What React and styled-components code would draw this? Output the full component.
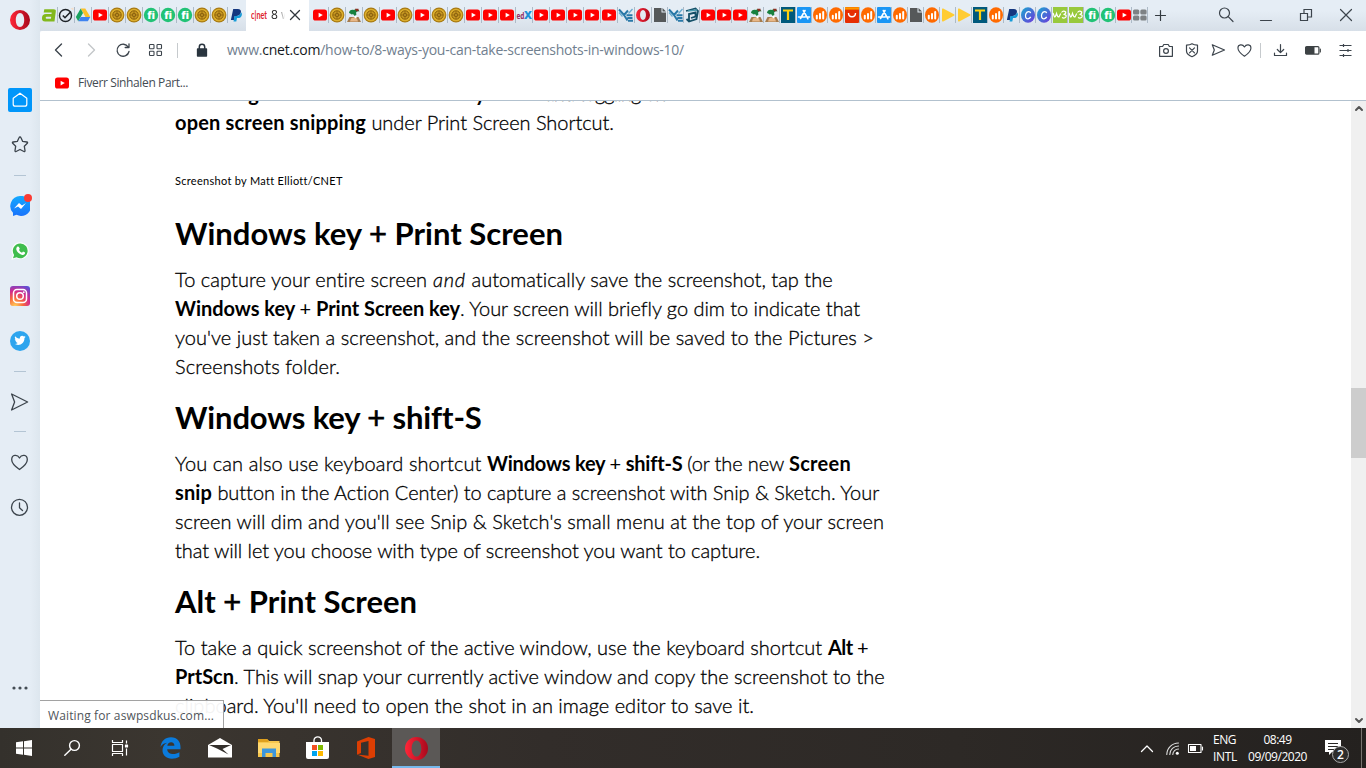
import React, { useLayoutEffect, useRef } from "react";
import styled, { createGlobalStyle, css } from "styled-components";

const Global = createGlobalStyle`
  * { box-sizing: border-box; }
  html, body { margin: 0; padding: 0; overflow: hidden; background: #fff; }
  svg { display: block; flex: none; }
`;

const uiFont = css`font-family: "Open Sans", "Noto Sans", sans-serif;`;
const articleFont = css`font-family: Lato, "Liberation Sans", sans-serif;`;

/* ---------- shell ---------- */
const Screen = styled.div`
  width: 1366px; height: 768px; display: flex; flex-direction: column; overflow: hidden;
  ${uiFont}
`;
const Browser = styled.div`
  height: 728px; display: flex; background: #e4ecf4;
`;
const Sidebar = styled.nav`
  width: 40px; flex: none; display: flex; flex-direction: column;
  background: linear-gradient(90deg, #e5edf5 0 75%, #dde6ee);
`;
const SideItem = styled.div`
  height: ${(p) => p.$h}px; margin-top: ${(p) => p.$top || "0"};
  display: flex; align-items: center; justify-content: center; flex: none;
`;
const SideRule = styled.div`
  height: 1px; width: 12px; margin: 7px auto 8px; background: #b4c5d4; flex: none;
`;
const Badged = styled.div`position: relative; display: flex;`;
const Badge = styled.i`
  position: absolute; right: -2px; top: -2px; width: 8px; height: 8px; border-radius: 50%; background: #fb3c34;
`;
const HomeTile = styled.div`
  width: 24px; height: 24px; border-radius: 2px; background: #0096fa; display: flex; align-items: center; justify-content: center;
`;
const Main = styled.div`flex: 1; min-width: 0; display: flex; flex-direction: column;`;

/* ---------- tabs ---------- */
const TabBar = styled.div`
  height: 31px; display: flex; padding-left: 1px; flex: none;
  background: linear-gradient(180deg, #e5edf5 0 35%, #d7dfe8);
`;
const Tab = styled.div`
  width: ${(p) => p.$w}px; height: 30px; flex: none; display: flex; align-items: center; padding-left: ${(p) => (p.$w > 16 ? 1 : 0.5)}px;
  &::after {
    content: ""; width: 1px; height: 16px; margin-left: auto; background: ${(p) => (p.$last ? "transparent" : "#adbac7")};
  }
`;
const ActiveTab = styled.div`
  width: 63px; margin: 0 3px 0 1px; height: 31px; background: #fff; display: flex; align-items: center; padding: 0 0 1px 5px; flex: none;
`;
const TabTitle = styled.span`
  width: 14px; margin-left: 4px; overflow: hidden; white-space: nowrap; font-size: 12px; line-height: 16px; color: #222;
  mask-image: linear-gradient(90deg, #000 45%, transparent);
`;
const TabClose = styled.span`margin-left: 5px; display: flex;`;
const WindowControls = styled.div`margin-left: auto; display: flex; height: 30px; padding-right: 1px;`;
const Slot = styled.div`
  width: ${(p) => p.$w}px; height: ${(p) => p.$h || "100%"}; flex: none; display: flex; align-items: center; justify-content: center;
`;

/* ---------- toolbar ---------- */
const Toolbar = styled.div`
  height: 38px; background: #fff; border-top-left-radius: 2px; display: flex; align-items: center; padding: 0 5px 0 3px; flex: none;
`;
const VRule = styled.i`
  width: 1px; height: 15px; margin: ${(p) => p.$m}; background: #c6cacd;
`;
const Url = styled.div`
  margin-left: 9px; font-size: 14px; line-height: 20px; color: #71808f; white-space: pre;
  b { font-weight: 400; color: #14181c; }
`;
const Push = styled.div`margin-left: auto; display: flex; align-items: center;`;
const Bookmarks = styled.div`
  height: 32px; background: #fff; border-bottom: 1px solid #b2c1ce; display: flex; align-items: center; padding: 0 0 3px 15px; flex: none;
  font-size: 12px; color: #434b53;
`;
const BookmarkName = styled.span`margin-left: 9px; line-height: 16px;`;

/* ---------- page ---------- */
const Viewport = styled.div`flex: 1; min-height: 0; display: flex; background: #fff; position: relative;`;
const Page = styled.article`
  flex: 1; min-width: 0; overflow: hidden; padding-left: 135px; color: #000;
  ${articleFont}
`;
const Scrolled = styled.div`margin-top: -22px;`;
const Paragraph = styled.div`font-size: 20px; font-weight: 300; line-height: 29px;`;
const Line = styled.div`height: 29px; white-space: pre; display: flex;`;
const Heading = styled.h2`
  margin: 18px 0 14px; height: 36px; line-height: 36px; font-size: 31px; font-weight: 700; white-space: pre; display: flex;
`;
const Caption = styled.div`
  margin: 34px 0 24px; height: 20px; line-height: 20px; font-size: 11px; white-space: pre; display: flex;
`;
const RunBox = styled.span`
  display: block; width: ${(p) => p.$w}px; flex: none; white-space: pre;
  font-weight: ${(p) => (p.$bold ? 700 : "inherit")};
  font-style: ${(p) => (p.$italic ? "italic" : "normal")};
  ${Paragraph} & { -webkit-text-stroke: ${(p) => (p.$bold ? "0" : "0.3px #000")}; }
`;
const Plus = styled.span`font-weight: 400; ${Heading} & { -webkit-text-stroke: 0.6px #000; }`;
const Scrollbar = styled.div`
  width: 15px; background: #f0f0f0; display: flex; flex-direction: column; align-items: center; justify-content: space-between; padding: 4px 0; position: relative;
`;
const Thumb = styled.div`position: absolute; left: 0; top: 287px; width: 15px; height: 70px; background: #cdcdcd;`;
const Status = styled.div`
  position: absolute; left: 0; bottom: 0; width: 184px; height: 28px; padding: 1px 0 0 8px; line-height: 28px;
  border-top: 1px solid #a2a2a2; border-right: 1px solid #a2a2a2; background: rgba(255, 255, 255, 0.95);
  font-size: 12px; color: #50555a; white-space: pre;
`;

/* ---------- taskbar ---------- */
const Taskbar = styled.footer`
  height: 40px; display: flex; background: linear-gradient(90deg, #34312c 0, #3b3630 12%, #322d2a 40%, #2d2926 70%, #24211f 100%); color: #fff;
`;
const TaskItem = styled.div`
  width: ${(p) => p.$w}px; margin-left: ${(p) => p.$ml || 0}px; height: 40px; display: flex; align-items: center; justify-content: center; flex: none;
  ${(p) => p.$active && css`background: #5b5856; border-bottom: 2px solid #76b9ed; padding-top: 2px;`}
`;
const Tray = styled.div`margin-left: auto; display: flex; align-items: center;`;
const TrayText = styled.div`
  width: ${(p) => p.$w}px; font-size: 12px; line-height: 17px; white-space: pre; padding-left: ${(p) => p.$pl || 0}px;
  display: flex; flex-direction: column; align-items: ${(p) => p.$align};
`;
const Notice = styled.div`position: relative; width: 52px; height: 40px; padding: 12px 0 0 16px;`;
const NoticeCount = styled.span`
  position: absolute; left: 23px; top: 18px; width: 17px; height: 17px; border-radius: 50%; border: 1px solid #a9a9a9; background: #2d2c2b;
  font-size: 12px; line-height: 15px; font-weight: 600; text-align: center;
`;
const ShowDesktop = styled.div`width: 5px; height: 40px; border-left: 1px solid #77736f;`;

/* Spreads the letters of a run so that it takes exactly the given measure. */
function Run({ w, bold, italic, children }) {
  const ref = useRef(null);
  useLayoutEffect(() => {
    const el = ref.current;
    el.style.letterSpacing = "0px";
    const range = document.createRange();
    range.selectNodeContents(el);
    const natural = range.getBoundingClientRect().width;
    el.style.letterSpacing = `${(w - natural) / el.textContent.length}px`;
  }, [w]);
  return <RunBox ref={ref} $w={w} $bold={bold} $italic={italic}>{children}</RunBox>;
}

/* ---------- favicons ---------- */
const Fav = ({ children, box = "0 0 14 14" }) => <svg width="14" height="16" viewBox={box} overflow="visible">{children}</svg>;
const YouTube = () => (
  <Fav><rect x="0" y="1.500" width="14" height="11" rx="2.600" fill="#f00" /><path d="M5.600 4.700l4.200 2.400-4.200 2.400z" fill="#fff" /></Fav>
);
const Coin = () => (
  <Fav><circle cx="7" cy="7" r="7.400" fill="#a87a12" /><circle cx="7" cy="7" r="6.300" fill="#dcae2c" /><circle cx="7" cy="7" r="4.200" fill="#c99a22" stroke="#8a5f0c" strokeWidth="1" /><circle cx="7" cy="7" r="1.800" fill="#e0b43a" stroke="#80570a" strokeWidth=".9" /><path d="M7 3v8M3 7h8" stroke="#8a5f0c" strokeWidth=".6" /></Fav>
);
const Fiverr = () => (
  <Fav><circle cx="7" cy="7" r="7.200" fill="#22c276" /><text x="7" y="11" textAnchor="middle" fontFamily="Open Sans" fontWeight="800" fontSize="10.500" fill="#fff">fi</text></Fav>
);
const PayPal = () => (
  <Fav><path d="M4.200 1h4.600c2.400 0 3.600 1.300 3.100 3.600C11.400 7 9.700 8 7.300 8H5.800L5 12H1.900z" fill="#14377f" /><path d="M11.900 4.200c1 .7 1.200 1.800.9 3C12.300 9.300 10.800 10 9 10H8l-.7 3.500H4.500L5.500 8h1.900c2.500 0 4.100-1.300 4.500-3.800z" fill="#169bd7" /></Fav>
);
const LogoA = () => (
  <Fav><path fillRule="evenodd" d="M2.300 1.200H11.500q2.700 0 2.300 2.400L12.500 13.500H3.200C.6 13.500-.2 12.200 0 9.800.2 7.200 1.500 6 4 6h5.500l.2-1.500H1.700zM9.200 8.800H4.700q-1 0-1 1t.9 1h4.300z" fill="#82b81c" /></Fav>
);
const CheckRing = () => (
  <Fav><circle cx="6.500" cy="7.500" r="6" fill="none" stroke="#1d2227" strokeWidth="1.400" /><path d="M3.800 7.500l2.200 2.200L12 3.500" fill="none" stroke="#1d2227" strokeWidth="1.600" /><path d="M11.500.5l3-1v3z" fill="#f3ddca" /></Fav>
);
const Drive = () => (
  <Fav><path d="M4.700 .5h4.600L14.300 9H9.500z" fill="#fbc02a" /><path d="M4.700.5L-.2 9l2.400 4.300L7 5z" fill="#1aa260" /><path d="M4.700 9h9.600l-2.500 4.300H2.300z" fill="#3f83f0" /></Fav>
);
const Palm = () => (
  <Fav><path d="M0 14L2.500 9h9l2.500 5z" fill="#a67b4c" /><path d="M4 10.500c2-1.500 4-1 6 0l1 3H3z" fill="#e8b787" /><path d="M2 5c0-3 3-4 5-3 2-2 5-1 5.500 1.500-2-.5-3 .3-3.500 1.500 1 1.500 0 2.500-1.500 3-.5-1.500-1.500-2-3-1.500C3.500 6 3 5 2 5z" fill="#18813e" /><path d="M8 .8h3.500v2.500H9z" fill="#8f2d21" /><circle cx="8.500" cy="9" r="1.200" fill="#fff" /></Fav>
);
const EdX = () => (
  <Fav><text x="-.5" y="10.500" fontFamily="Open Sans" fontWeight="700" fontSize="9" fill="#962f63" textLength="8" lengthAdjust="spacingAndGlyphs">ed</text><text x="7" y="11" fontFamily="Open Sans" fontWeight="800" fontSize="11" fill="#1e91d6">X</text></Fav>
);
const Ye = () => (
  <Fav><path d="M0 1.500l5 5.500 4-4.500M5 7l3.500 5.500M7.500 7.200h6M8.300 10h5.200M9 12.800h5" fill="none" stroke="#2878a8" strokeWidth="2" /><path d="M0 4.500l3.500 4M9.500 5.500l4-4.500" stroke="#67aace" strokeWidth="1.300" /></Fav>
);
const OperaO = ({ s = 14, tall = 16 }) => (
  <svg width={s} height={tall} viewBox="0 0 20 20">
    <defs><linearGradient id="op" x1="0" x2="1"><stop offset="0" stopColor="#ff2638" /><stop offset="1" stopColor="#a8091c" /></linearGradient></defs>
    <path fillRule="evenodd" fill="url(#op)" d="M10 0a10 10 0 1 0 0 20 10 10 0 0 0 0-20zm0 3c2.700 0 4.200 3.300 4.200 7s-1.500 7-4.200 7-4.200-3.300-4.200-7S7.300 3 10 3z" />
  </svg>
);
const Doc = () => (<Fav><path d="M1 0h7.500v4.500H13V14H1z" fill="#55585a" /><path d="M9.500 0L13 3.500H9.500z" fill="#55585a" /></Fav>);
const Penta = () => (
  <Fav><path d="M1 3l9.500-2.500L13 3l-1.500 8-7.500 2.500L1.500 11M4 13V6l6.500-1.500v4L6 10" fill="none" stroke="#155068" strokeWidth="1.800" /><path d="M3 3l9-1" stroke="#4b9caf" strokeWidth="1.500" /></Fav>
);
const Tee = () => (<Fav><rect width="14" height="16" y="-1" fill="#00597c" /><path d="M2 2.500h10M7 2.500V12" stroke="#ffd10f" strokeWidth="2.200" /></Fav>);
const AppStore = () => (
  <Fav><rect width="14" height="16" y="-1" rx="1" fill="#1a96f5" /><path d="M8 2.500L3.500 10.500M6.300 2.500l4.600 8.300M1.500 9h6.800M10 9h2.500" stroke="#fff" strokeWidth="1.600" strokeLinecap="round" /></Fav>
);
const Bars = () => (<Fav><ellipse cx="7" cy="7" rx="7" ry="7.700" fill="#ff6a00" /><path d="M3.800 10.500V7.800M7 10.500V6M10.200 10.500V4" stroke="#fff" strokeWidth="2" strokeLinecap="round" /></Fav>);
const Bag = () => (<Fav><rect y="-1" width="14" height="16" rx="1" fill="#e62e04" /><path d="M0-.8h14v2.400H0z" fill="#ff9a00" /><path d="M3.500 5c0 5 7 5 7 0" fill="none" stroke="#fff" strokeWidth="1.400" /></Fav>);
const Play = () => (<Fav><path d="M1 1.200Q1 0 2.200.6L13 6.200q1.300.8 0 1.600L2.200 13.400Q1 14 1 12.800z" fill="#ffcc33" /></Fav>);
const Canva = () => (
  <Fav><defs><linearGradient id="cv" x1="0" y1="0" x2="1" y2="1"><stop offset="0" stopColor="#18a9cf" /><stop offset="1" stopColor="#7037dc" /></linearGradient></defs><ellipse cx="7" cy="7" rx="7" ry="7.700" fill="url(#cv)" /><path d="M9.600 5.200C9.300 3 6.200 3 5 5.500S4.700 11 7 10.800c1.300-.1 2.200-.9 2.700-1.900" fill="none" stroke="#fff" strokeWidth="1.300" /></Fav>
);
const W3 = () => (<Fav><rect y="-1" width="14" height="16" fill="#98c93c" /><path d="M0 5l1.500 4q1 0 2-3.500Q4.500 9 6 9l1.700-3.500M8.500 4.500q2-2.500 4.200-.5Q13 6 10.500 6.500q3.500.3 2.500 2.300-1.500 2-4 .7" fill="none" stroke="#fff" strokeWidth="1.200" /></Fav>);
const Tiles = () => (<Fav><g fill="#7d8184"><rect y="1.500" width="6.300" height="5" rx="1.500" /><rect x="7.300" y="1.500" width="6.300" height="5" rx="1.500" /><rect y="7.500" width="6.300" height="5" rx="1.500" /><rect x="7.300" y="7.500" width="6.300" height="5" rx="1.500" /></g></Fav>);

const leftTabs = [LogoA, CheckRing, Drive, YouTube, Coin, Coin, Fiverr, Fiverr, Fiverr, Coin, Coin, PayPal];
const wideTabs = [YouTube, Coin, Palm, Coin, YouTube, Coin, YouTube, Coin, Coin, YouTube, YouTube, YouTube, EdX, YouTube, YouTube, YouTube, YouTube, YouTube, Ye, OperaO];
const slimTabs = [Doc, Ye, Penta, YouTube, YouTube, YouTube, Palm, Palm, Tee, AppStore, Bars, Bars, Bag, Bars, AppStore, Bars, Doc, Bars, Play, Play, Tee, Bars, PayPal, Canva, Canva, W3, W3, Fiverr, Fiverr, YouTube, Tiles];

/* ---------- line icons ---------- */
const Ico = ({ w = 16, h = w, c = "#3c444c", sw = 1.2, children }) => (
  <svg width={w} height={h} viewBox={`0 0 ${w} ${h}`} fill="none" stroke={c} strokeWidth={sw} strokeLinecap="round" strokeLinejoin="round" overflow="visible">{children}</svg>
);
const heart = "M8 14.300C5.500 12.500 1 9 1 5.300 1 1.500 6 .8 8 4.300 10 .8 15 1.500 15 5.300 15 9 10.500 12.500 8 14.300z";

function Tabs() {
  return (
    <TabBar>
      {leftTabs.map((I, i) => <Tab key={i} $w={17} $last={i === 11}><I /></Tab>)}
      <ActiveTab>
        <svg width="16" height="16"><text x="0" y="12" fontFamily="Lato" fontWeight="700" fontSize="11" fill="#e0232b" textLength="16" lengthAdjust="spacingAndGlyphs">c|net</text></svg>
        <TabTitle>8 w</TabTitle>
        <TabClose><Ico w={10} c="#2f363c" sw={1.3}><path d="M.5.5l9 9M9.500.5l-9 9" /></Ico></TabClose>
      </ActiveTab>
      {wideTabs.map((I, i) => <Tab key={i} $w={17}><I /></Tab>)}
      {slimTabs.map((I, i) => <Tab key={i} $w={16}><I /></Tab>)}
      <Slot $w={25} $h="30px"><Ico w={11} c="#333a40" sw={1.2}><path d="M5.500.5v10M.5 5.500h10" /></Ico></Slot>
      <WindowControls>
        <Slot $w={40}><Ico w={15}><circle cx="5.500" cy="5" r="5" /><path d="M9.200 8.700l4.800 4.800" /></Ico></Slot>
        <Slot $w={40}><Ico w={12}><path d="M.5 11.500h11" /></Ico></Slot>
        <Slot $w={40}><Ico w={12}><path d="M.5 4.500h7v7h-7zM4 4V.5h7.500V8H8" strokeLinejoin="miter" /></Ico></Slot>
        <Slot $w={39}><Ico w={12}><path d="M.5.5l11 11M11.500.5l-11 11" /></Ico></Slot>
      </WindowControls>
    </TabBar>
  );
}

function AddressBar() {
  return (
    <Toolbar>
      <Slot $w={32}><Ico w={8} h={14} sw={1.4}><path d="M6.500 1L.5 7l6 6" /></Ico></Slot>
      <Slot $w={32}><Ico w={8} h={14} c="#c3c6c9" sw={1.4}><path d="M1.500 1l6 6-6 6" /></Ico></Slot>
      <Slot $w={32}><Ico w={14} sw={1.3}><path d="M12.200 4A6 6 0 1 0 13 8.500M13 .8V4.500H9.200" /></Ico></Slot>
      <Slot $w={32}><Ico w={13} h={12} sw={1.1}><rect x=".5" y=".5" width="4.500" height="4.200" rx=".8" /><rect x="8" y=".5" width="4.500" height="4.200" rx=".8" /><rect x=".5" y="7.300" width="4.500" height="4.200" rx=".8" /><rect x="8" y="7.300" width="4.500" height="4.200" rx=".8" /></Ico></Slot>
      <VRule $m="0 8px 0 6px" />
      <Slot $w={32}><Ico w={10} h={13} c="#29343e" sw={1.5}><rect x=".6" y="5.100" width="8.800" height="6.800" fill="#29343e" /><path d="M2.300 5V3a2.700 2.700 0 0 1 5.400 0v2" /></Ico></Slot>
      <Url><Run w={457}>www.<b>cnet.com</b>/how-to/8-ways-you-can-take-screenshots-in-windows-10/</Run></Url>
      <Push>
        <Slot $w={26}><Ico w={14} h={13}><path d="M.6 2.500h3L4.800.5h4.400l1.200 2h3v9.800H.6z" /><circle cx="7" cy="7" r="2.400" /></Ico></Slot>
        <Slot $w={26}><Ico w={12} h={14}><path d="M6 .8c2 1.300 3.500 1.300 5.500 1.300v6c0 3-2.500 4.500-5.500 5.600C3 12.600.5 11.100.5 8.100v-6C2.500 2.100 4 2.100 6 .8zM3.500 4.800l5 5M8.500 4.800l-5 5" /></Ico></Slot>
        <Slot $w={26}><Ico w={14} h={12}><path d="M1.300.8L13.500 6 1.300 11.200 3.300 6z" /></Ico></Slot>
        <Slot $w={26}><Ico w={15} h={14}><path transform="scale(.93)" d={heart} /></Ico></Slot>
        <VRule $m="0 3px 0 3px" />
        <Slot $w={32}><Ico w={13} h={12}><path d="M6.500.5v8M3.300 5.500l3.200 3.200 3.200-3.200M.5 9v2.500h12V9" /></Ico></Slot>
        <Slot $w={33}><Ico w={16} h={9} c="#3d4244"><rect x=".6" y=".6" width="13.300" height="7.600" rx="1" /><path d="M1 1h8.500v7H1z" fill="#3d4244" stroke="none" /><path d="M15.300 3v3" /></Ico></Slot>
        <Slot $w={32}><Ico w={13} h={11}><path d="M.5.500h12M.5 5.500h12M.5 10.500h12M4.500-1v3M9 4v3M4.500 9v3" strokeLinecap="butt" /></Ico></Slot>
      </Push>
    </Toolbar>
  );
}

function SideBar() {
  return (
    <Sidebar>
      <SideItem $h={40}><OperaO s={20} tall={20} /></SideItem>
      <SideItem $h={44} $top="38px"><HomeTile><Ico w={16} c="#fff"><path d="M8 1.200L1.200 6.300v5.900q0 2 2 2h9.600q2 0 2-2V6.300z" /></Ico></HomeTile></SideItem>
      <SideItem $h={46}><Ico w={18} sw={1.3}><path d="M9 1q.7 0 1 .7l1.700 3.700 4.100.6q1.300.3.500 1.300l-3 2.900.7 4.500q0 1.300-1.100.8L9 13.500l-3.900 2q-1.100.5-1.100-.8l.7-4.500-3-2.900Q.900 6.300 2.200 6l4.100-.6L8 1.700Q8.300 1 9 1z" /></Ico></SideItem>
      <SideRule />
      <SideItem $h={44}>
        <Badged>
          <svg width="20" height="20"><defs><linearGradient id="ms" x1="0" x2="0" y2="1"><stop stopColor="#12a9ff" /><stop offset="1" stopColor="#1a73fb" /></linearGradient></defs><path d="M10 0a10 10 0 1 1-3.500 18.800L3 20v-3.200A10 10 0 0 1 10 0z" fill="url(#ms)" /><path d="M4 12.500L9 7l3 2.400L16 7l-5 6-3-2.600z" fill="#fff" /></svg>
          <Badge />
        </Badged>
      </SideItem>
      <SideItem $h={46}><svg width="18" height="18" viewBox="0 0 18 18"><path d="M9.300.3a8.500 8.500 0 1 1-4 16L.3 18l1.500-4.900A8.500 8.500 0 0 1 9.300.3z" fill="#fafdfb" /><path d="M9.300 1.400a7.400 7.400 0 1 1-3.800 13.800L2 16.300l1.100-3.400A7.400 7.400 0 0 1 9.300 1.400z" fill="#3fbd4d" /><path d="M6.500 4.600l1.300.1 1 2.100-.8 1.200q1 2 3 2.700l1-1.100 2.100 1c.2 2-1.600 2.700-3 2.300-3-.7-5.300-3-5.800-5.400-.1-1.200.4-2.200 1.200-2.900z" fill="#fff" /></svg></SideItem>
      <SideItem $h={44}><svg width="20" height="20"><defs><radialGradient id="ig" cx=".25" cy="1" r="1.150"><stop stopColor="#ffd05a" /><stop offset=".35" stopColor="#f8683d" /><stop offset=".65" stopColor="#d32b8d" /><stop offset="1" stopColor="#5b50d8" /></radialGradient></defs><rect width="20" height="20" rx="3" fill="url(#ig)" /><g fill="none" stroke="#fff" strokeWidth="1.500"><rect x="3.500" y="3.500" width="13" height="13" rx="3.500" /><circle cx="10" cy="10" r="3.300" /></g><circle cx="13.800" cy="6.200" r=".9" fill="#fff" /></svg></SideItem>
      <SideItem $h={46}><svg width="20" height="20" viewBox="0 0 20 20"><circle cx="10" cy="10" r="10" fill="#2ea5ee" /><path transform="translate(3.800 3.500) scale(.5)" d="M23.600 4.600c-.8.400-1.700.6-2.600.8.900-.6 1.700-1.500 2-2.500-.9.5-1.900.9-2.900 1.100a4.600 4.600 0 0 0-7.900 4.200C8.400 8 5 6.200 2.700 3.300c-1.200 2.100-.6 4.800 1.400 6.200-.7 0-1.500-.2-2.100-.6 0 2.200 1.600 4.200 3.700 4.600-.7.2-1.400.2-2.100.1.600 1.800 2.300 3.100 4.300 3.200A9.300 9.300 0 0 1 1.100 18.700c10.300 6 20.600-1.500 20.200-11.700.9-.6 1.700-1.500 2.300-2.400z" fill="#fff" /></svg></SideItem>
      <SideRule />
      <SideItem $h={44}><Ico w={18} sw={1.3}><path d="M.6 1l16 8-16 8 3-8z" /></Ico></SideItem>
      <SideRule />
      <SideItem $h={44}><Ico w={18} h={16} sw={1.3}><path d="M8.500 15.500C5.500 13.400.7 9.700.7 5.700.7.200 6.500.2 8.500 4c2-3.800 7.800-3.800 7.800 1.700 0 4-4.800 7.700-7.800 9.800z" /></Ico></SideItem>
      <SideItem $h={46}><Ico w={18} sw={1.3}><circle cx="8.500" cy="9.300" r="8" /><path d="M8.500 5v4.800l3 2.800" /></Ico></SideItem>
      <SideItem $h={80} $top="auto"><svg width="16" height="4" fill="#444c54"><circle cx="2" cy="2" r="1.600" /><circle cx="8" cy="2" r="1.600" /><circle cx="14" cy="2" r="1.600" /></svg></SideItem>
    </Sidebar>
  );
}

function Article() {
  return (
    <Page>
      <Scrolled>
        <Paragraph>
          <Line><Run w={370} bold>{"> Settings > Ease of Access > Keyboard "}</Run><Run w={125}>{"and toggling on "}</Run><Run w={200} bold>Use the PrtScn button to</Run></Line>
          <Line><Run w={191} bold>open screen snipping</Run><Run w={248}>{" under Print Screen Shortcut."}</Run></Line>
        </Paragraph>
        <Caption><Run w={167}>Screenshot by Matt Elliott/CNET</Run></Caption>
        <Heading><Run w={388}>Windows key <Plus>+</Plus> Print Screen</Run></Heading>
        <Paragraph>
          <Line><Run w={258}>{"To capture your entire screen "}</Run><Run w={33} italic>and</Run><Run w={367}>{" automatically save the screenshot, tap the"}</Run></Line>
          <Line><Run w={285} bold>Windows key <Plus>+</Plus> Print Screen key</Run><Run w={400}>. Your screen will briefly go dim to indicate that</Run></Line>
          <Line><Run w={699}>{"you've just taken a screenshot, and the screenshot will be saved to the Pictures >"}</Run></Line>
          <Line><Run w={165}>Screenshots folder.</Run></Line>
        </Paragraph>
        <Heading><Run w={306}>Windows key <Plus>+</Plus> shift-S</Run></Heading>
        <Paragraph>
          <Line><Run w={312}>{"You can also use keyboard shortcut "}</Run><Run w={195} bold>Windows key <Plus>+</Plus> shift-S</Run><Run w={107}>{" (or the new "}</Run><Run w={62} bold>Screen</Run></Line>
          <Line><Run w={37} bold>snip</Run><Run w={667}>{" button in the Action Center) to capture a screenshot with Snip & Sketch. Your"}</Run></Line>
          <Line><Run w={709}>{"screen will dim and you'll see Snip & Sketch's small menu at the top of your screen"}</Run></Line>
          <Line><Run w={585}>that will let you choose with type of screenshot you want to capture.</Run></Line>
        </Paragraph>
        <Heading><Run w={242}>Alt <Plus>+</Plus> Print Screen</Run></Heading>
        <Paragraph>
          <Line><Run w={653}>{"To take a quick screenshot of the active window, use the keyboard shortcut "}</Run><Run w={40} bold>Alt <Plus>+</Plus></Run></Line>
          <Line><Run w={59} bold>PrtScn</Run><Run w={651}>. This will snap your currently active window and copy the screenshot to the</Run></Line>
          <Line><Run w={579}>{"clipboard. You'll need to open the shot in an image editor to save it."}</Run></Line>
        </Paragraph>
      </Scrolled>
    </Page>
  );
}

function WindowsTaskbar() {
  return (
    <Taskbar>
      <TaskItem $w={48}><svg width="16" height="16" fill="#fff"><path d="M0 2.300L7 1.300V7.500H0zM8 1.200L16 0v7.500H8zM0 8.500h7v6.200l-7-1zM8 8.500h8V16L8 14.800z" /></svg></TaskItem>
      <TaskItem $w={48}><Ico w={16} c="#fff" sw={1.4}><circle cx="10.500" cy="5.500" r="4.900" /><path d="M7 9.200L.8 15.300" /></Ico></TaskItem>
      <TaskItem $w={48}><Ico w={16} c="#fff" sw={1.2}><path d="M.5 0v2.500h10V0M.5 16v-2.500h10V16M.5 4.500h10v7H.5zM14.500.5v3M14.500 8.500v7" strokeLinecap="butt" /><rect x="13.500" y="5" width="2" height="2" fill="#fff" /></Ico></TaskItem>
      <TaskItem $w={49} $ml={2}><svg width="21" height="22" viewBox="0 0 21 22"><path d="M.5 10C1.200 4 5 .2 11 .2c6.400 0 9.600 4.700 9.500 9.800v2.300H7.200c.2 3.500 3 4.800 6 4.800 2.300 0 4.400-.7 6.200-1.800v4.500c-2 1.200-4.600 1.900-7.500 1.900C6.300 21.700 2.400 18 2.500 13.200c0-3.300 1.700-6 4.700-7.500C4 6 2 7.500.5 10zM7.300 8.700h7.100c0-2.300-1.200-3.500-3.300-3.500S7.700 6.500 7.300 8.700z" fill="#0b7bdc" /></svg></TaskItem>
      <TaskItem $w={49}><svg width="24" height="20"><path d="M0 7L12 0l12 7v12.500H0z" fill="#fff" /><path d="M1 7h22L14.500 11l6 5.500L9 10.500z" fill="#34302c" /></svg></TaskItem>
      <TaskItem $w={49}><svg width="22" height="20"><path d="M0 1h9l2 2h10.500v16H0z" fill="#f6c64d" /><path d="M0 1h9l2 2-1 1H0z" fill="#dfa01e" /><path d="M0 5h22v10H0z" fill="#ffd86f" /><path d="M4 19v-8.500h14V19h-3.500v-4h-7v4z" fill="#3c96dc" /></svg></TaskItem>
      <TaskItem $w={48}><svg width="23" height="24"><path d="M8 6V4a3.800 3.800 0 0 1 7.500 0v2" fill="none" stroke="#fff" strokeWidth="1.300" /><path d="M0 6h23v15q0 2-2 2H2q-2 0-2-2z" fill="#fff" /><path d="M6 9h5v5H6z" fill="#f25022" /><path d="M12 9h5v5h-5z" fill="#7fba00" /><path d="M6 15h5v5H6z" fill="#00a4ef" /><path d="M12 15h5v5h-5z" fill="#ffb900" /></svg></TaskItem>
      <TaskItem $w={50}><svg width="18" height="22"><path d="M0 4.500L11.500 0 18 2v18l-6.500 2L0 17.500l11.500 1.300V4L4 5.800v10.300l-4 1.600z" fill="#dc3e03" /></svg></TaskItem>
      <TaskItem $w={48} $ml={1} $active><OperaO s={23} tall={23} /></TaskItem>
      <Tray>
        <Slot $w={26}><Ico w={12} h={7} c="#fff" sw={1.3}><path d="M.5 6.500L6 1l5.500 5.500" /></Ico></Slot>
        <Slot $w={24}><Ico w={13} c="#ddd" sw={1.1}><path d="M.8 12.500A11.700 11.700 0 0 1 12.500 1M3.800 12.500A8.700 8.700 0 0 1 12.500 4M6.800 12.500A5.700 5.700 0 0 1 12.500 7" /><circle cx="11.300" cy="11.300" r="1.500" fill="#fff" stroke="none" /></Ico></Slot>
        <Slot $w={24}><Ico w={15} h={9} c="#fff" sw={1.1}><path d="M-.5.500h12.500v8H-.5z" /><path d="M1 2h6v5H1z" fill="#fff" stroke="none" /><path d="M13.500 3v3" /></Ico></Slot>
        <Slot $w={5} />
        <TrayText $w={32} $align="flex-start"><Run w={23}>ENG</Run><Run w={24}>INTL</Run></TrayText>
        <TrayText $w={64} $pl={1} $align="center"><Run w={28}>08:49</Run><Run w={59}>09/09/2020</Run></TrayText>
        <Notice>
          <svg width="17" height="16"><path d="M0 0h16v12H7l-3 3v-3H0z" fill="#fff" /><path d="M3 3.500h10M3 6.500h10M3 9.500h6" stroke="#2a2826" /></svg>
          <NoticeCount>2</NoticeCount>
        </Notice>
        <ShowDesktop />
      </Tray>
    </Taskbar>
  );
}

export default function App() {
  return (
    <Screen>
      <Global />
      <Browser>
        <SideBar />
        <Main>
          <Tabs />
          <AddressBar />
          <Bookmarks><YouTube /><BookmarkName><Run w={110}>Fiverr Sinhalen Part...</Run></BookmarkName></Bookmarks>
          <Viewport>
            <Article />
            <Scrollbar>
              <Ico w={8} h={6} c="#555" sw={2}><path d="M1 5l3-3 3 3" /></Ico>
              <Thumb />
              <Ico w={8} h={6} c="#555" sw={2}><path d="M1 1l3 3 3-3" /></Ico>
            </Scrollbar>
            <Status><Run w={166}>Waiting for aswpsdkus.com...</Run></Status>
          </Viewport>
        </Main>
      </Browser>
      <WindowsTaskbar />
    </Screen>
  );
}
